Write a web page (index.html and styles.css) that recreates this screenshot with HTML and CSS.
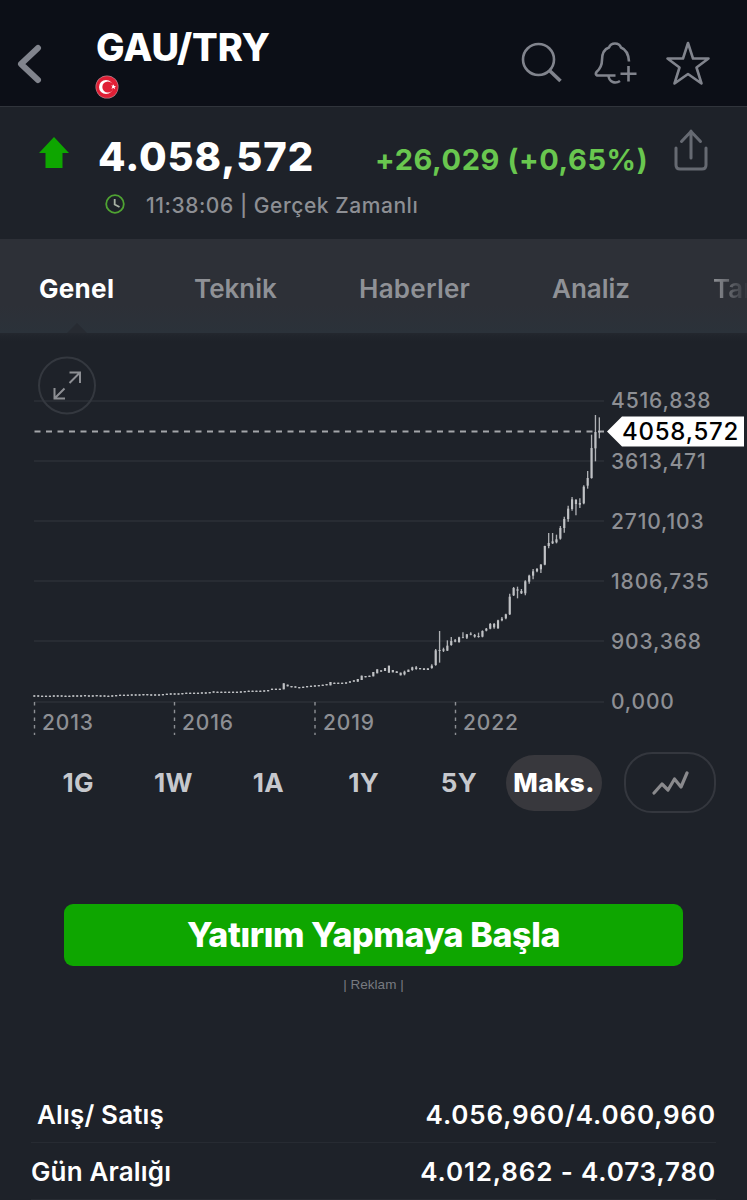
FILE: index.html
```html
<!DOCTYPE html>
<html lang="tr">
<head>
    <meta charset="UTF-8">
    <title>GAU/TRY</title>
    <link rel="stylesheet" href="styles.css">
</head>
<body>
    <header class="header">
        <svg class="back" width="26" height="40" viewBox="0 0 26 40"><path d="M21 4L4 20L21 36"/></svg>
        <div class="title">
            <h1>GAU/TRY</h1>
            <svg class="flag" width="24" height="24" viewBox="0 0 24 24">
                <circle cx="12" cy="12" r="11.5" fill="#b9818a"/>
                <circle cx="12" cy="12" r="10.8" fill="#e01f35"/>
                <circle cx="11" cy="12" r="7" fill="#fff"/>
                <circle cx="12.9" cy="12" r="5.6" fill="#e01f35"/>
                <path d="M18.6 9.2l.6 1.9 1.9.1-1.5 1.1.5 1.9-1.6-1.1-2.1.6 1-1.9-1.2-1.4 1.8.1z" fill="#fff"/>
            </svg>
        </div>
        <div class="actions">
            <svg width="44" height="48" viewBox="0 0 44 48"><circle cx="18.5" cy="20.5" r="15.5"/><path d="M29.500 31.500L40.500 42" stroke-width="3.600"/></svg>
            <svg width="44" height="48" viewBox="-1.5 0 44 48">
                <path d="M21 36.500H2.500C1 35.500 1 34.500 2 33C6 29.500 7.500 26 7.500 21C7.500 13.500 10 10 14.500 8.500C16.500 3.200 24.500 3.200 26.500 8.500C31.500 10.500 34 14 34.500 22.500"/>
                <path d="M14 36.500C14.500 43.500 21 45 25.500 42M26 34.800H42M34 27V42.500"/>
            </svg>
            <svg width="46" height="48" viewBox="0 0 46 48"><path d="M23 4L28 19.500H43.500L31.500 28.500L36.500 44.500L23 35L9.500 44.500L14.500 28.500L2.500 19.500H18Z"/></svg>
        </div>
    </header>

    <section class="quote">
        <div class="quote-main">
            <svg class="arrow" width="30" height="32" viewBox="0 0 30 32"><path d="M15 0L30 16H23.500V31H6.500V16H0Z"/></svg>
            <span class="price">4.058,572</span>
            <span class="change">+26,029 (+0,65%)</span>
            <svg class="share" width="34" height="42" viewBox="0 0 34 42"><path d="M2 19V36Q2 40 6 40H28Q32 40 32 36V19M17 29V2M7.500 12.500L17 2.500L26.500 12.500"/></svg>
        </div>
        <div class="quote-time">
            <svg class="clock" width="20" height="20" viewBox="0 0 20 20"><circle cx="10" cy="10" r="8.800" stroke="#4fa332"/><path d="M9.700 5V10.500L14.500 13" stroke="#a9b3a5"/></svg>
            <span>11:38:06 | Gerçek Zamanlı</span>
        </div>
    </section>

    <nav class="tabs">
        <a class="tab tab-genel active">Genel</a>
        <a class="tab tab-teknik">Teknik</a>
        <a class="tab tab-haberler">Haberler</a>
        <a class="tab tab-analiz">Analiz</a>
        <a class="tab tab-last">Tartışma</a>
    </nav>

    <section class="chart">
        <svg width="747" height="407" viewBox="0 0 747 407">
            <g class="grid">
                <path d="M34 68H604M34 128H604M34 188H604M34 248H604M34 308H604M34 369H604"/>
            </g>
            <path class="years-line" d="M34.500 369V402M174.500 369V402M315 369V402M455.500 369V402"/>
            <path class="last-line" d="M34.500 98.500H604"/>
            <g id="candles" transform="translate(0 67) scale(0.33333)"></g>
            <g class="axis">
                <text x="611" y="75.400">4516,838</text>
                <text x="611" y="135.900">3613,471</text>
                <text x="611" y="196">2710,103</text>
                <text x="611" y="256.400">1806,735</text>
                <text x="611" y="316.400">903,368</text>
                <text x="611" y="376.400">0,000</text>
                <text x="42" y="396.500">2013</text>
                <text x="182" y="396.500">2016</text>
                <text x="323" y="396.500">2019</text>
                <text x="463" y="396.500">2022</text>
            </g>
            <path class="tag" d="M607 98.500L622 83.500H744V113.500H622Z"/>
            <text class="tag-text" x="622" y="107">4058,572</text>
            <g class="expand">
                <circle cx="67" cy="52.500" r="28"/>
                <path d="M69.500 39.500H80V50M80 39.500L69.500 50M54.500 55V65.500H65M54.500 65.500L64.500 55.500"/>
            </g>
        </svg>
    </section>

    <div class="ranges">
        <button class="range">1G</button>
        <button class="range">1W</button>
        <button class="range">1A</button>
        <button class="range">1Y</button>
        <button class="range">5Y</button>
        <button class="range selected">Maks.</button>
        <button class="chart-type">
            <svg width="38" height="26" viewBox="0 0 38 26"><path d="M3 23L11 14L17 20L23.500 9L30 17L36 3"/></svg>
        </button>
    </div>

    <div class="ad">
        <a class="ad-button">Yatırım Yapmaya Başla</a>
        <span class="ad-label">| Reklam |</span>
    </div>

    <div class="details">
        <div class="row row-first"><span>Alış/ Satış</span><span class="value">4.056,960/4.060,960</span></div>
        <div class="row"><span>Gün Aralığı</span><span class="value">4.012,862 - 4.073,780</span></div>
    </div>

    <script src="script.js"></script>
</body>
</html>
```
FILE: styles.css
```css
* {
    box-sizing: border-box;
}

body {
    margin: 0;
    width: 747px;
    height: 1200px;
    overflow: hidden;
    background-color: #1e2229;
    color: #fff;
    font-family: Inter, "Liberation Sans", sans-serif;
}

svg {
    display: block;
    flex: none;
    fill: none;
}

.header {
    display: flex;
    height: 107px;
    background-color: #0c0f17;
    border-bottom: 1px solid #30343b;
}

.back {
    margin: 44px 0 0 17px;
    stroke: #81848d;
    stroke-width: 6;
    stroke-linecap: round;
    stroke-linejoin: round;
}

.title {
    margin-left: 52px;
    padding-top: 27px;
}

.title h1 {
    margin: 0;
    padding-left: 1px;
    height: 40px;
    line-height: 40px;
    font-size: 38px;
    font-weight: 850;
    letter-spacing: -0.1px;
    white-space: nowrap;
}

.flag {
    margin-top: 8px;
}

.actions {
    display: flex;
    gap: 28.5px;
    margin: 39px 36px 0 auto;
    stroke: #81848d;
    stroke-width: 2.6;
    stroke-linejoin: round;
}

.quote {
    height: 132px;
    padding-top: 22px;
}

.quote-main {
    display: flex;
    height: 55px;
    padding: 0 39px 0 39px;
}

.arrow {
    margin-top: 8px;
    fill: #0ea600;
}

.price {
    margin-left: 29px;
    width: 277px;
    line-height: 56px;
    font-size: 40px;
    font-weight: 850;
    letter-spacing: 0.95px;
}

.change {
    line-height: 62px;
    font-size: 29px;
    font-weight: 650;
    letter-spacing: 0.6px;
    color: #69c74f;
    white-space: nowrap;
}

.share {
    margin-left: auto;
    stroke: #666a72;
    stroke-width: 3;
    stroke-linejoin: round;
    stroke-linecap: round;
}

.quote-time {
    display: flex;
    align-items: center;
    height: 42px;
    padding-left: 105px;
    gap: 21px;
    font-size: 21px;
    font-weight: 550;
    letter-spacing: 0.55px;
    color: #8d8f94;
}

.clock {
    margin-top: -2px;
    stroke-width: 1.8;
}

.tabs {
    display: flex;
    position: relative;
    height: 94px;
    overflow: hidden;
    background: linear-gradient(#2d3037 70%, #2b323a);
    line-height: 99px;
    font-size: 26px;
    font-weight: 600;
    color: #8f9196;
}

/* small notch under the open tab */
.tabs::after {
    content: "";
    position: absolute;
    left: 67px;
    bottom: 0;
    border: 10px solid transparent;
    border-top: 0;
    border-bottom-color: #272b32;
}

.tab {
    flex: none;
}

.tab-genel {
    width: 155px;
    margin-left: 39px;
}

.tab-teknik {
    width: 165px;
}

.tab-haberler {
    width: 193px;
    letter-spacing: 0.25px;
}

.tab-analiz {
    width: 161px;
}

.tab-last {
    background: linear-gradient(90deg, #8f9196, #2d3037 36px);
    -webkit-background-clip: text;
    background-clip: text;
    color: transparent;
}

.active {
    font-weight: 700;
    letter-spacing: 0.3px;
    color: #fff;
}

.chart {
    height: 419px;
    background: linear-gradient(#23272e, #1e2229 8px);
}

.grid {
    stroke: #282c33;
    stroke-width: 2;
}

.years-line {
    stroke: #8d8f94;
    stroke-width: 1.4;
    stroke-dasharray: 3.5 4.2;
}

.last-line {
    stroke: #a4a6aa;
    stroke-width: 2;
    stroke-dasharray: 6 5.5;
}

.wick {
    stroke: #aeb0b4;
    stroke-width: 4;
}

.candle {
    stroke: #bfc1c4;
    stroke-width: 6.5;
}

.axis {
    fill: #8d8f94;
    font-size: 21px;
    font-weight: 550;
    letter-spacing: 0.85px;
}

.tag {
    fill: #fff;
}

.tag-text {
    fill: #000;
    font-size: 24px;
    font-weight: 550;
    letter-spacing: 0.75px;
}

.expand circle {
    stroke: #34383f;
    stroke-width: 2;
}

.expand path {
    stroke: #8d8f94;
    stroke-width: 2;
}

.ranges {
    display: flex;
    align-items: center;
    height: 61px;
    padding-left: 30.5px;
}

.range {
    width: 95.2px;
    height: 56px;
    padding: 0;
    border: 0;
    border-radius: 28px;
    background: none;
    font-family: inherit;
    font-size: 26px;
    font-weight: 650;
    letter-spacing: 0.3px;
    color: #c6c8cd;
}

.selected {
    background-color: #38383d;
    font-weight: 850;
    letter-spacing: 0.5px;
    color: #fff;
}

.chart-type {
    display: flex;
    align-items: center;
    justify-content: center;
    width: 92px;
    height: 61px;
    margin-left: 22.5px;
    padding: 0;
    border: 2px solid #34373e;
    border-radius: 28px;
    background: none;
}

.chart-type svg {
    stroke: #8a8a8d;
    stroke-width: 3.2;
    stroke-linecap: round;
    stroke-linejoin: round;
}

.ad {
    display: flex;
    flex-direction: column;
    align-items: center;
    height: 273px;
    padding-top: 91px;
}

.ad-button {
    width: 619px;
    height: 62px;
    border-radius: 9px;
    background-color: #0ea600;
    line-height: 61px;
    text-align: center;
    font-size: 34px;
    font-weight: 850;
    letter-spacing: -0.4px;
}

.ad-label {
    margin-top: 11px;
    line-height: 16px;
    font-family: "Liberation Sans", Arial, sans-serif;
    font-size: 13.5px;
    color: #777a80;
}

.row {
    display: flex;
    justify-content: space-between;
    height: 57px;
    margin: 0 31px;
    border-bottom: 1px solid #272b32;
    line-height: 57px;
    font-size: 26px;
    font-weight: 600;
    letter-spacing: 0.15px;
}

.row-first {
    padding-left: 6px;
}

.value {
    letter-spacing: 0.85px;
}
```
FILE: script.js
```js
// [high, low, body top, body bottom], one entry per month
var recent = [
    [818, 826], [812, 826, 815, 823], [809, 816], [800, 812, 802, 810], [798, 809, 802, 807],
    [804, 808], [805, 810], [805, 810], [793, 806, 797, 804], [747, 797, 751, 795],
    [693, 788, 750, 753], [743, 756, 748, 752], [721, 753, 737, 752], [711, 737, 723, 735],
    [717, 727, 721, 725], [710, 728, 712, 726], [697, 715, 711, 713], [702, 717, 703, 713],
    [697, 706, 701, 704], [702, 713, 705, 710], [698, 713, 708, 711], [691, 712, 693, 710],
    [684, 694, 686, 692], [669, 688, 672, 686], [669, 686, 672, 682], [659, 686, 661, 685],
    [651, 664, 656, 661], [641, 658, 643, 655], [581, 645, 590, 643], [561, 588, 564, 586],
    [560, 595, 568, 572], [567, 582, 573, 580], [541, 586, 544, 580], [524, 551, 527, 545],
    [507, 538, 514, 527], [504, 517, 507, 514], [492, 519, 494, 508], [437, 496, 438, 494],
    [399, 445, 429, 438], [399, 432, 424, 430], [404, 430, 418, 427], [378, 419, 384, 416],
    [350, 398, 357, 384], [317, 365, 326, 357], [291, 332, 298, 327], [297, 346, 300, 312],
    [295, 324, 309, 314], [256, 313, 260, 310], [213, 266, 234, 257], [104, 236, 144, 234],
    [45, 184, 96, 145], [52, 115, 93, 97]
];

// the quiet years are almost flat, so only the middle of each month is kept
var early = [
    888, 888, 889, 889, 889, 888, 888, 888, 889, 889, 888, 888, 888, 887, 888, 888, 887, 888, 888, 889,
    888, 887, 886, 886, 886, 885, 885, 885, 884, 884, 885, 885, 885, 884, 883, 882, 882, 882, 881, 880,
    880, 880, 880, 879, 879, 878, 876, 877, 877, 877, 877, 877, 877, 876, 875, 874, 874, 874, 874, 873,
    872, 868, 868, 868, [850, 868], [854, 859], 860, 861, 863, 862, 860, 859, 858, 857, 856, 854,
    [846, 856], 850, 850, 850, 849, 846, 843, [837, 845], [827, 840], 830, 829, [816, 829],
    [808, 820], 813, [804, 813], [797, 818], [810, 817], [814, 819]
];

var candles = early.map(function(c) {
    return Array.isArray(c) ? c : [c - 2, c + 2];
}).concat(recent);

function addLine(className, x, top, bottom) {
    var line = document.createElementNS("http://www.w3.org/2000/svg", "path");
    line.setAttribute("class", className);
    line.setAttribute("d", "M" + x + " " + top + "V" + bottom);
    document.getElementById("candles").appendChild(line);
}

candles.forEach(function(c, i) {
    var x = 103 + i * 11.69;
    addLine("wick", x, c[0], c[1]);
    addLine("candle", x, c.length > 2 ? c[2] : c[0], c.length > 2 ? c[3] : c[1]);
});
```
